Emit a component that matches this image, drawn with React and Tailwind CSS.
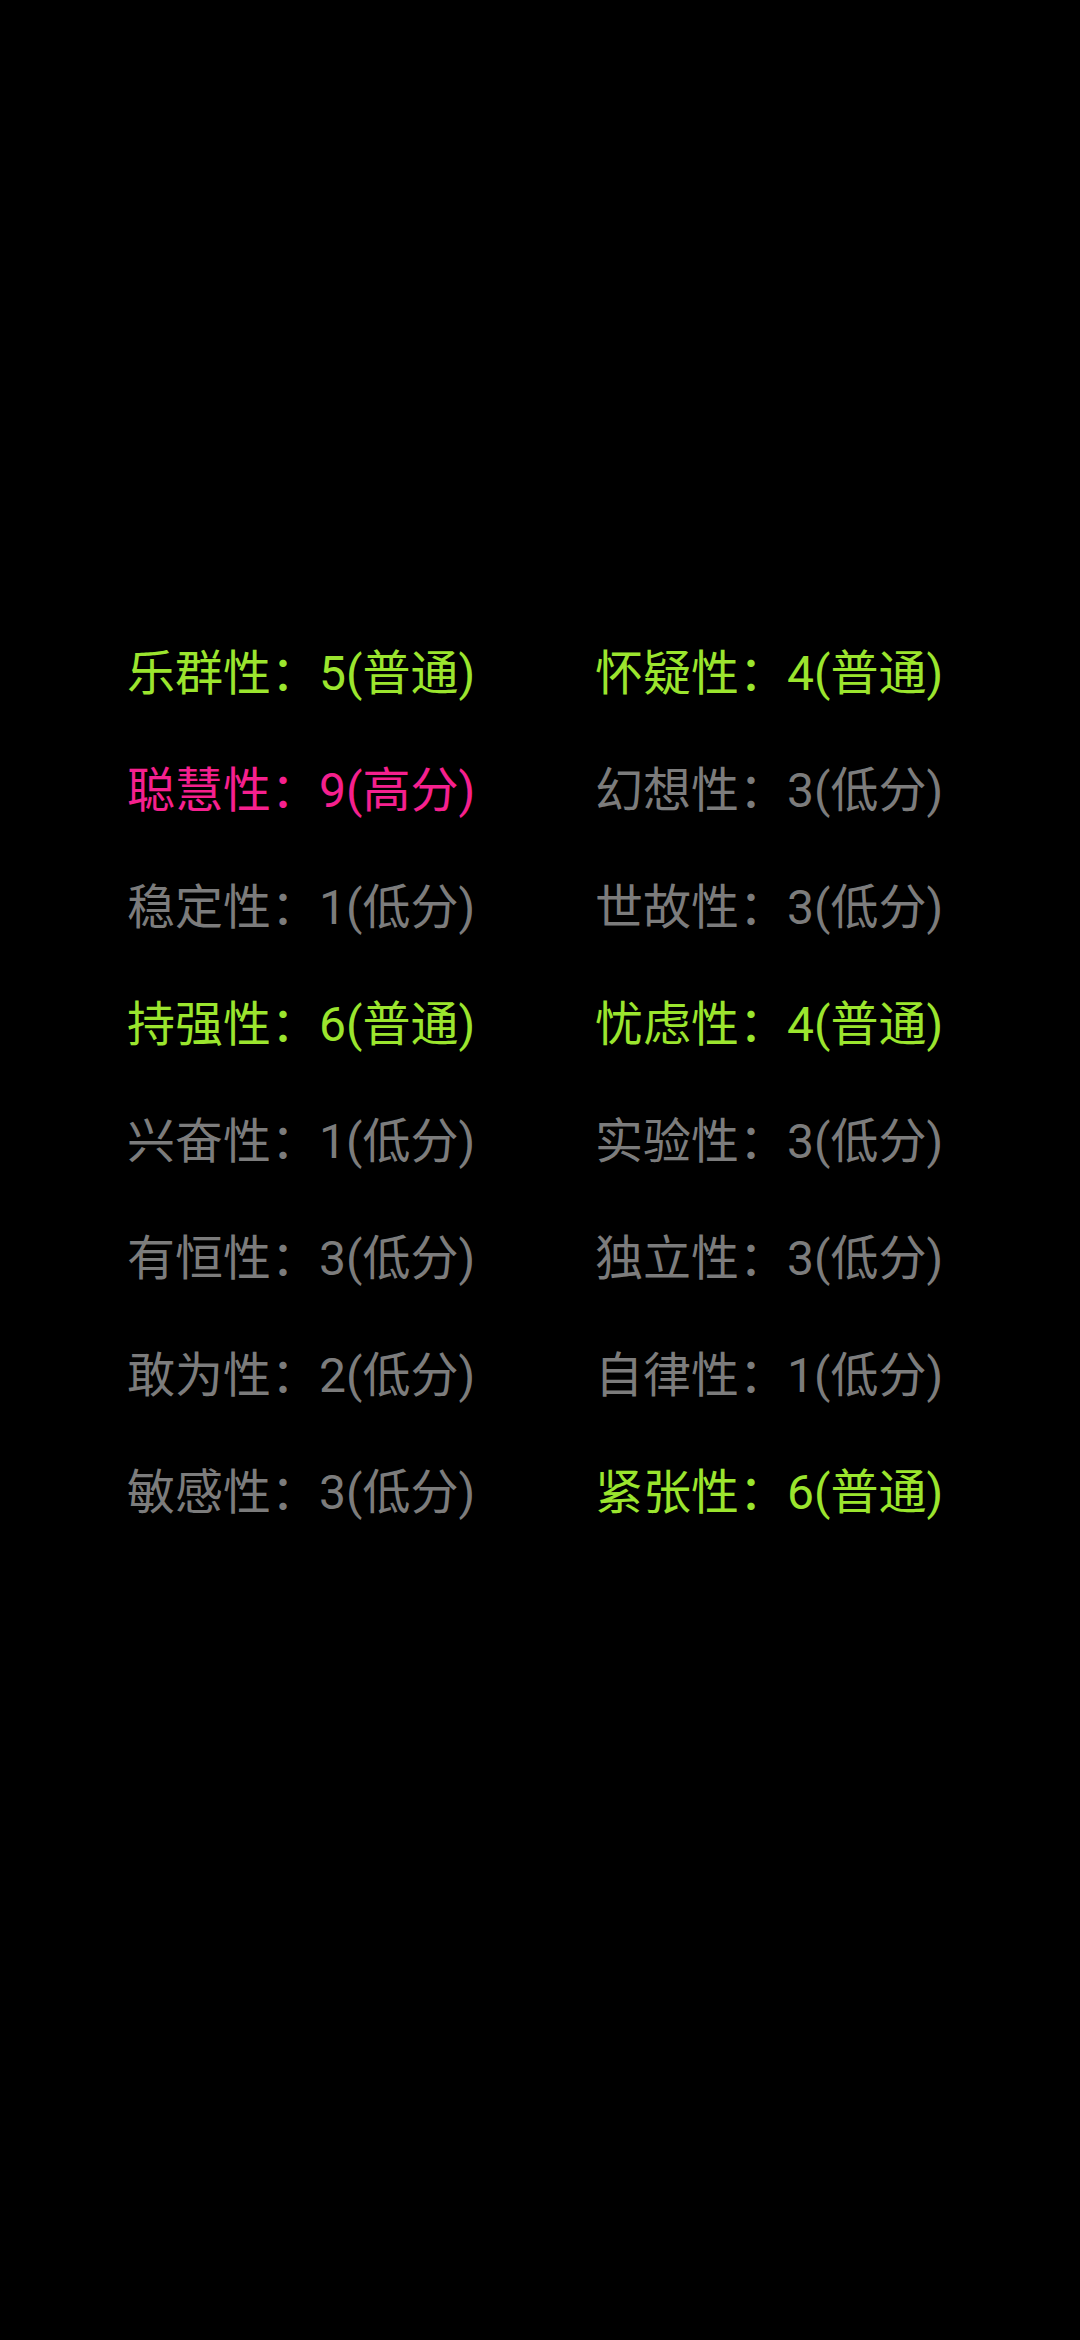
import React from "react";

const GREEN = "text-[#9be52e]";
const PINK = "text-[#f5208e]";
const GRAY = "text-[#7c7c7c]";

const rows = [
  [["乐群性", "5(普通)", GREEN], ["怀疑性", "4(普通)", GREEN]],
  [["聪慧性", "9(高分)", PINK], ["幻想性", "3(低分)", GRAY]],
  [["稳定性", "1(低分)", GRAY], ["世故性", "3(低分)", GRAY]],
  [["持强性", "6(普通)", GREEN], ["忧虑性", "4(普通)", GREEN]],
  [["兴奋性", "1(低分)", GRAY], ["实验性", "3(低分)", GRAY]],
  [["有恒性", "3(低分)", GRAY], ["独立性", "3(低分)", GRAY]],
  [["敢为性", "2(低分)", GRAY], ["自律性", "1(低分)", GRAY]],
  [["敏感性", "3(低分)", GRAY], ["紧张性", "6(普通)", GREEN]],
];

function Trait({ name, value, color }) {
  return (
    <div className={`h-[117px] flex items-center text-[48px] leading-none ${color}`}>
      {name}：{value}
    </div>
  );
}

export default function App() {
  return (
    <div
      className="bg-black min-h-[2340px] w-[1080px] pt-[615px] pl-[127px]"
      style={{ fontFamily: 'Roboto, "Noto Sans CJK SC", sans-serif' }}
    >
      <div className="grid grid-cols-[468px_468px]">
        {rows.map((r, i) => (
          <React.Fragment key={i}>
            <Trait name={r[0][0]} value={r[0][1]} color={r[0][2]} />
            <Trait name={r[1][0]} value={r[1][1]} color={r[1][2]} />
          </React.Fragment>
        ))}
      </div>
    </div>
  );
}
